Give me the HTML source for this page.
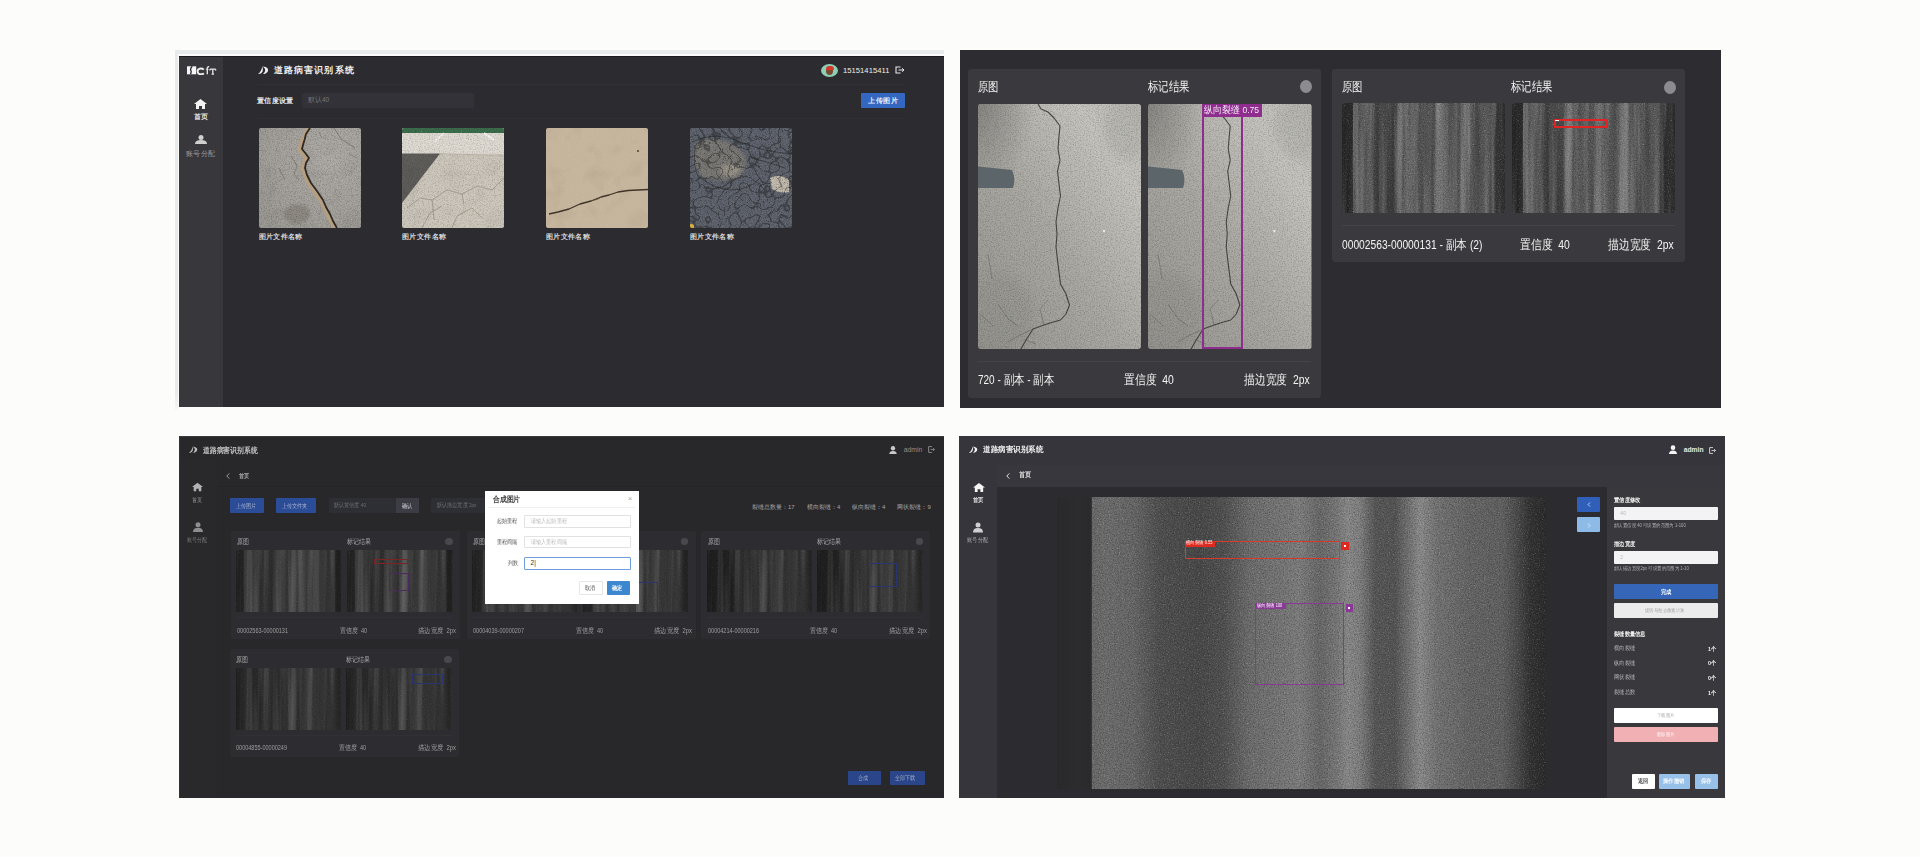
<!DOCTYPE html>
<html><head><meta charset="utf-8">
<style>
*{margin:0;padding:0;box-sizing:border-box}
html,body{width:1920px;height:857px;overflow:hidden;background:#fcfcfa;font-family:"Liberation Sans",sans-serif;position:relative}
.a{position:absolute}
.t{position:absolute;white-space:nowrap;line-height:1}
</style></head><body>
<svg width="0" height="0" style="position:absolute">
<defs>
<filter id="spk" x="0" y="0" width="100%" height="100%"><feTurbulence type="fractalNoise" baseFrequency="0.8" numOctaves="2" seed="2"/><feColorMatrix type="matrix" values="0 0 0 0 0  0 0 0 0 0  0 0 0 0 0  0 0 0 -2.2 1.25"/></filter>
<filter id="spkw" x="0" y="0" width="100%" height="100%"><feTurbulence type="fractalNoise" baseFrequency="0.8" numOctaves="2" seed="7"/><feColorMatrix type="matrix" values="0 0 0 0 1  0 0 0 0 1  0 0 0 0 1  0 0 0 2.2 -1.25"/></filter>
<filter id="blot" x="0" y="0" width="100%" height="100%"><feTurbulence type="fractalNoise" baseFrequency="0.05" numOctaves="3" seed="5"/><feColorMatrix type="matrix" values="0 0 0 0 0  0 0 0 0 0  0 0 0 0 0  0 0 0 -1.2 0.6"/></filter>
<filter id="streak" x="0" y="0" width="100%" height="100%"><feTurbulence type="fractalNoise" baseFrequency="0.18 0.006" numOctaves="2" seed="11"/><feColorMatrix type="matrix" values="0 0 0 0 1  0 0 0 0 1  0 0 0 0 1  0 0 0 -3 1.6"/></filter>
<filter id="streakd" x="0" y="0" width="100%" height="100%"><feTurbulence type="fractalNoise" baseFrequency="0.18 0.006" numOctaves="2" seed="4"/><feColorMatrix type="matrix" values="0 0 0 0 0  0 0 0 0 0  0 0 0 0 0  0 0 0 -3 1.6"/></filter>
<filter id="veins" x="0" y="0" width="100%" height="100%" color-interpolation-filters="sRGB"><feTurbulence type="turbulence" baseFrequency="0.1" numOctaves="1" seed="9"/><feColorMatrix type="matrix" values="0 0 0 0 0.1  0 0 0 0 0.1  0 0 0 0 0.1  -14 0 0 0 1.25"/></filter>
<filter id="blur1" x="-30%" y="-30%" width="160%" height="160%"><feGaussianBlur stdDeviation="0.6"/></filter>
<filter id="blur2" x="-30%" y="-30%" width="160%" height="160%"><feGaussianBlur stdDeviation="1.5"/></filter>
<filter id="blur4" x="-50%" y="-50%" width="200%" height="200%"><feGaussianBlur stdDeviation="4"/></filter>
</defs></svg>

<!-- ============ PANEL 1 ============ -->
<div class="a" style="left:175px;top:50px;width:769px;height:4px;background:#e9eaec"></div>
<div class="a" style="left:175px;top:50px;width:3px;height:360px;background:linear-gradient(180deg,#e9eaec 95%,#f6f6f6)"></div>
<div class="a" style="left:178px;top:54px;width:766px;height:2px;background:#fbfbfb"></div>
<div class="a" id="p1" style="left:179px;top:56px;width:765px;height:351px;background:#2c2b2f;overflow:hidden">
  <div class="a" style="left:0;top:0;width:765px;height:1px;background:#1c1b1f"></div>
  <div class="a" style="left:0;top:1px;width:44px;height:350px;background:#38373c"></div>
  <!-- logo -->
  <svg class="a" style="left:7.5px;top:9.6px" width="30" height="9" viewBox="0 0 30 9">
    <path d="M0 0.3 L9.2 0.3 L9.2 8.3 L0 8.3 Z" fill="#f6f6f6"/>
    <path d="M5.2 0.3 Q3.2 2.5 3.7 4.2 Q4.8 5.2 3.5 8.3" stroke="#2f2e33" stroke-width="1.4" fill="none"/>
    <path d="M16.8 3.6 Q15.5 2.4 13.6 2.5 Q10.6 2.8 10.6 5.5 Q10.8 8.3 13.8 8.3 Q15.6 8.3 16.8 7.2" stroke="#ececec" stroke-width="1.9" fill="none"/>
    <path d="M20.3 8.3 L20.3 2 Q20.6 0.6 22.2 0.5" stroke="#e2e0e0" stroke-width="1.4" fill="none"/>
    <path d="M18.8 3.3 L21.6 3.3" stroke="#e2e0e0" stroke-width="0.9"/>
    <path d="M23 3.2 L28.6 3.2 M25.8 3.2 L25.8 8.3 M24.6 8.2 L27 8.2 M23 3 L23 4.4 M28.6 3 L28.6 4.4" stroke="#e8e6e6" stroke-width="1.3" fill="none"/>
  </svg>
  <!-- sidebar icons -->
  <svg class="a" style="left:15px;top:43px" width="13" height="10" viewBox="0 0 13 10"><path d="M6.5 0 L13 5 L11 5 L11 10 L8 10 L8 7 L5 7 L5 10 L2 10 L2 5 L0 5 Z" fill="#f2f2f2"/></svg>
  <div class="t" style="left:15px;top:57px;font-size:7px;color:#e6e6e6;font-weight:bold">首页</div>
  <svg class="a" style="left:16px;top:79px" width="12" height="9" viewBox="0 0 12 9"><circle cx="6" cy="2.5" r="2.5" fill="#cfcfcf"/><path d="M0 9 Q0 5 6 5 Q12 5 12 9 Z" fill="#cfcfcf"/></svg>
  <div class="t" style="left:7px;top:94px;font-size:7px;color:#9a9a9e;letter-spacing:0.4px">账号分配</div>
  <!-- title -->
  <svg class="a" style="left:78.7px;top:9.7px" width="11" height="9" viewBox="0 0 11 9"><path d="M0 8 C3.8 8.3 6 5 4.3 0.4 C3.6 4 2.2 6.3 0 8 Z M5 8.1 C8.6 8.2 11.2 4.8 9.6 2.4 C8.8 1.1 6.6 0.3 4.3 0.4 C6.9 1.6 8.9 4 5 8.1 Z" fill="#f0f0f0"/></svg>
  <div class="t" style="left:95px;top:10px;font-size:9px;font-weight:bold;color:#f0f0f0;letter-spacing:1.1px">道路病害识别系统</div>
  <div class="a" style="left:78px;top:28px;width:648px;height:1px;background:#313035"></div>
  <!-- user -->
  <div class="a" style="left:642px;top:7.5px;width:17px;height:13px;border-radius:50%;background:#8ccfb4;overflow:hidden">
    <div class="a" style="left:5px;top:3px;width:7px;height:8px;border-radius:50%;background:#7a4a30"></div>
    <div class="a" style="left:4.5px;top:2px;width:8px;height:4px;border-radius:4px 4px 1px 1px;background:#d8362a"></div>
  </div>
  <div class="t" style="left:664px;top:10.6px;font-size:7.6px;color:#eeeeee;letter-spacing:0.05px">15151415411</div>
  <svg class="a" style="left:716px;top:10px" width="10" height="8" viewBox="0 0 10 8"><path d="M5.5 1 L1 1 L1 7 L5.5 7" stroke="#e8e8e8" stroke-width="1.1" fill="none"/><path d="M3.5 4 L9 4 M7 2.3 L9 4 L7 5.7" stroke="#e8e8e8" stroke-width="1" fill="none"/></svg>
  <!-- setting row -->
  <div class="t" style="left:78px;top:40.5px;font-size:7px;font-weight:bold;color:#e8e8e8;letter-spacing:0.3px">置信度设置</div>
  <div class="a" style="left:123px;top:36.5px;width:172px;height:15px;background:#333238;border-radius:2px"></div>
  <div class="t" style="left:129px;top:41px;font-size:6.5px;color:#77767c">默认40</div>
  <div class="a" style="left:682px;top:37px;width:44px;height:14.5px;background:#3468c0;border-radius:1px"></div>
  <div class="t" style="left:689px;top:41px;font-size:7px;color:#e8eefa;font-weight:bold;letter-spacing:0.5px">上传图片</div>
  <div class="a" style="left:78px;top:61.5px;width:648px;height:1px;background:#302f34"></div>
  <!-- images -->
  <div class="a" style="left:79.5px;top:72px;width:102px;height:100px;border-radius:2px;overflow:hidden"><svg width="102" height="100" viewBox="0 0 102 100">
<defs><radialGradient id="i1g" cx="0.7" cy="0.3" r="0.9"><stop offset="0" stop-color="#aeaba6"/><stop offset="1" stop-color="#9d9a95"/></radialGradient></defs>
<rect width="102" height="100" fill="url(#i1g)"/>
<rect width="102" height="100" filter="url(#blot)" opacity="0.12"/>
<ellipse cx="38" cy="86" rx="13" ry="10" fill="#6f6a62" opacity="0.4" filter="url(#blur2)"/>
<rect width="102" height="100" filter="url(#spk)" opacity="0.22"/>
<rect width="102" height="100" filter="url(#spkw)" opacity="0.2"/>
<path d="M49 0 L43 12 L40 21 L47 30 L43 40 L49 55 L61 72 L68 86 L75 100" stroke="#b59f80" stroke-width="3.4" fill="none" stroke-linejoin="round" filter="url(#blur1)"/>
<path d="M51 0 L47 6 L45.5 12 L44 17 L43 21 L47 26 L50 30 L47 35 L46 40 L48 47 L52 55 L58 63 L64 72 L67 79 L71 86 L74 93 L78 100" stroke="#2f2923" stroke-width="1.8" fill="none" stroke-linejoin="round"/>
<path d="M75 0 L82 11 L96 20 M60 4 L63 10 M32 28 L38 38 L35 46 L40 52 M20 40 L26 52 M90 26 L98 30" stroke="#5e574e" stroke-width="0.8" fill="none" opacity="0.6"/>
</svg></div>
  <div class="a" style="left:223px;top:72px;width:102px;height:100px;border-radius:2px;overflow:hidden"><svg width="102" height="100" viewBox="0 0 102 100">
<rect width="102" height="100" fill="#cdc7bc"/>
<rect width="102" height="26" fill="#dedad2"/>
<rect width="102" height="5" fill="#3b6d4c"/>
<rect x="19" y="2" width="1" height="3" fill="#c0503a"/><rect x="59" y="2" width="1" height="3" fill="#c0503a"/>
<path d="M42 5 L32 14 M82 5 L92 12" stroke="#f6f6f6" stroke-width="1.6"/>
<path d="M0 25.5 L38 25.5 L0 75 Z" fill="#5f5e5b"/>
<rect y="26" width="102" height="74" filter="url(#blot)" opacity="0.1"/>
<rect width="102" height="100" filter="url(#spk)" opacity="0.18"/>
<path d="M5 80 L18 70 L30 72 L45 62 L60 66 L75 58 L90 62 L102 50 M20 100 L28 85 L40 78 M50 100 L55 88 L70 80 L80 90 M60 66 L62 76 M30 72 L32 92" stroke="#6f695f" stroke-width="0.6" fill="none" opacity="0.7"/>
<path d="M38 25.5 L102 28" stroke="#b8b0a3" stroke-width="0.8"/>
</svg></div>
  <div class="a" style="left:366.8px;top:72px;width:102px;height:100px;border-radius:2px;overflow:hidden"><svg width="102" height="100" viewBox="0 0 102 100">
<rect width="102" height="100" fill="#c5b59c"/>
<rect width="102" height="100" filter="url(#blot)" opacity="0.1"/>
<rect width="102" height="100" filter="url(#spkw)" opacity="0.15"/>
<path d="M3 86 L12 84 L23 81 L34 76 L45 73 L55 69 L63 67 L72 64 L82 62.5 L92 62 L102 61.5" stroke="#3e3428" stroke-width="1.3" fill="none" stroke-linejoin="round"/>
<path d="M45 73 L52 71 L57 68" stroke="#5a4c3a" stroke-width="0.8" fill="none"/>
<circle cx="92" cy="23" r="0.9" fill="#3e3428"/>
</svg></div>
  <div class="a" style="left:510.8px;top:72px;width:102px;height:100px;border-radius:2px;overflow:hidden"><svg width="102" height="100" viewBox="0 0 102 100">
<rect width="102" height="100" fill="#5e636d"/>
<path d="M4 18 Q10 10 30 12 Q45 14 55 28 Q58 40 50 48 Q35 56 15 50 Q4 44 4 30 Z" fill="#858179" filter="url(#blur2)" opacity="0.75"/>
<ellipse cx="40" cy="42" rx="10" ry="6" fill="#a49e92" filter="url(#blur2)" opacity="0.7"/>
<path d="M80 50 Q90 45 99 52 L99 64 Q90 66 82 61 Z" fill="#c3bcae" filter="url(#blur1)"/>
<rect width="102" height="100" filter="url(#spk)" opacity="0.3"/>
<rect width="102" height="100" filter="url(#spkw)" opacity="0.15"/>
<rect width="102" height="100" filter="url(#veins)" opacity="0.42"/>
<path d="M2 14 Q20 5 40 10 Q60 18 75 22 Q90 25 102 26 M5 20 Q3 40 8 48 Q22 60 40 62 Q60 62 70 50 M55 15 L62 30 L80 35 L95 40" stroke="#23231f" stroke-width="0.9" fill="none" opacity="0.6"/>
<circle cx="1.5" cy="98.5" r="2.5" fill="#d8b040"/>
</svg></div>
  <div class="t" style="left:79.5px;top:176.5px;font-size:7px;font-weight:bold;color:#d8d8d8;letter-spacing:0.4px">图片文件名称</div>
  <div class="t" style="left:223px;top:176.5px;font-size:7px;font-weight:bold;color:#d8d8d8;letter-spacing:0.4px">图片文件名称</div>
  <div class="t" style="left:366.8px;top:176.5px;font-size:7px;font-weight:bold;color:#d8d8d8;letter-spacing:0.4px">图片文件名称</div>
  <div class="t" style="left:510.8px;top:176.5px;font-size:7px;font-weight:bold;color:#d8d8d8;letter-spacing:0.4px">图片文件名称</div>
</div>

<!-- ============ PANEL 2 ============ -->
<div class="a" id="p2" style="left:960px;top:50px;width:761px;height:358px;background:#2d2c31;overflow:hidden">
  <!-- card 1 -->
  <div class="a" style="left:8px;top:19px;width:353px;height:329px;background:#3a393e;border-radius:3px"></div>
  <div class="t" style="left:18px;top:30.5px;font-size:12.5px;color:#f2f2f2;transform:scaleX(0.8);transform-origin:left">原图</div>
  <div class="t" style="left:187.5px;top:30.5px;font-size:12.5px;color:#f2f2f2;transform:scaleX(0.8);transform-origin:left">标记结果</div>
  <div class="a" style="left:340px;top:30px;width:12px;height:13px;border-radius:50%;background:#8c8b90"></div>
  <div class="a" style="left:18px;top:53.5px;width:163px;height:245px;border-radius:3px;overflow:hidden"><svg width="163" height="245" viewBox="0 0 163 245" preserveAspectRatio="none" style="display:block"><defs><linearGradient id="cl1" x1="0" y1="1" x2="1" y2="0"><stop offset="0" stop-color="#95948e"/><stop offset="0.45" stop-color="#a9a8a2"/><stop offset="0.8" stop-color="#c4c3bd"/><stop offset="1" stop-color="#bdbcb6"/></linearGradient><radialGradient id="cr1" cx="0" cy="0" r="0.35"><stop offset="0" stop-color="#7c7b77" stop-opacity="0.8"/><stop offset="1" stop-color="#7c7b77" stop-opacity="0"/></radialGradient></defs><rect width="163" height="245" fill="url(#cl1)"/><rect width="163" height="245" fill="url(#cr1)"/><ellipse cx="150" cy="25" rx="25" ry="30" fill="#a3a29d" opacity="0.3" filter="url(#blur4)"/><ellipse cx="20" cy="210" rx="35" ry="40" fill="#8f8e89" opacity="0.4" filter="url(#blur4)"/><rect width="163" height="245" filter="url(#spk)" opacity="0.2"/><rect width="163" height="245" filter="url(#spkw)" opacity="0.16"/><path d="M-5 62 L34 66 Q38 74 35 84 L-5 84 Z" fill="#5b656a" filter="url(#blur1)"/><path d="M60 0 L63 5 L70 8 L76 14 L82 22 L81 32 L80 45 L82 56 L79.5 67 L81 80 L82.5 92 L80 104 L78 118 L79 130 L78 143 L80 160 L82.5 180 L88 190 L91.5 201 L88 210 L82.5 216 L72 219 L66 221 L55 225 L48 236 L43 245" stroke="#3a3936" stroke-width="1.1" fill="none" stroke-linejoin="round" opacity="0.9"/><path d="M55 225 L40 232 L30 238 M20 200 L30 215 L40 222 M10 150 L14 175 M2 210 L15 222 M66 221 L62 205 L70 196 M48 236 L58 240" stroke="#55534e" stroke-width="0.7" fill="none" opacity="0.6"/><circle cx="126" cy="127" r="1.2" fill="#e8e8e4"/></svg></div>
  <div class="a" style="left:188px;top:53.5px;width:163.5px;height:245px;border-radius:3px;overflow:hidden"><svg width="163.5" height="245" viewBox="0 0 163 245" preserveAspectRatio="none" style="display:block"><defs><linearGradient id="cl2" x1="0" y1="1" x2="1" y2="0"><stop offset="0" stop-color="#95948e"/><stop offset="0.45" stop-color="#a9a8a2"/><stop offset="0.8" stop-color="#c4c3bd"/><stop offset="1" stop-color="#bdbcb6"/></linearGradient><radialGradient id="cr2" cx="0" cy="0" r="0.35"><stop offset="0" stop-color="#7c7b77" stop-opacity="0.8"/><stop offset="1" stop-color="#7c7b77" stop-opacity="0"/></radialGradient></defs><rect width="163" height="245" fill="url(#cl2)"/><rect width="163" height="245" fill="url(#cr2)"/><ellipse cx="150" cy="25" rx="25" ry="30" fill="#a3a29d" opacity="0.3" filter="url(#blur4)"/><ellipse cx="20" cy="210" rx="35" ry="40" fill="#8f8e89" opacity="0.4" filter="url(#blur4)"/><rect width="163" height="245" filter="url(#spk)" opacity="0.2"/><rect width="163" height="245" filter="url(#spkw)" opacity="0.16"/><path d="M-5 62 L34 66 Q38 74 35 84 L-5 84 Z" fill="#5b656a" filter="url(#blur1)"/><path d="M60 0 L63 5 L70 8 L76 14 L82 22 L81 32 L80 45 L82 56 L79.5 67 L81 80 L82.5 92 L80 104 L78 118 L79 130 L78 143 L80 160 L82.5 180 L88 190 L91.5 201 L88 210 L82.5 216 L72 219 L66 221 L55 225 L48 236 L43 245" stroke="#3a3936" stroke-width="1.1" fill="none" stroke-linejoin="round" opacity="0.9"/><path d="M55 225 L40 232 L30 238 M20 200 L30 215 L40 222 M10 150 L14 175 M2 210 L15 222 M66 221 L62 205 L70 196 M48 236 L58 240" stroke="#55534e" stroke-width="0.7" fill="none" opacity="0.6"/><circle cx="126" cy="127" r="1.2" fill="#e8e8e4"/></svg>
    <div class="a" style="left:53.5px;top:0;width:41px;height:245px;border:2px solid #8e2d8e"></div>
    <div class="a" style="left:53.5px;top:0;width:60.5px;height:13.5px;background:#8e2d8e"></div>
    <div class="t" style="left:56px;top:1.5px;font-size:9.5px;color:#f4e8f4;transform:scaleX(0.9);transform-origin:left">纵向裂缝 0.75</div>
  </div>
  <div class="a" style="left:18px;top:311px;width:333px;height:1px;background:#444349"></div>
  <div class="t" style="left:18px;top:324px;font-size:12.5px;color:#f4f4f4;transform:scaleX(0.8);transform-origin:left">720 - 副本 - 副本</div>
  <div class="t" style="left:164px;top:324px;font-size:12.5px;color:#f4f4f4;font-weight:500;transform:scaleX(0.83);transform-origin:left">置信度 &nbsp;40</div>
  <div class="t" style="left:283.5px;top:324px;font-size:12.5px;color:#f4f4f4;transform:scaleX(0.83);transform-origin:left">描边宽度 &nbsp;2px</div>

  <!-- card 2 -->
  <div class="a" style="left:372px;top:19px;width:353px;height:193px;background:#3a393e;border-radius:3px"></div>
  <div class="t" style="left:381.5px;top:31px;font-size:12.5px;color:#f2f2f2;transform:scaleX(0.8);transform-origin:left">原图</div>
  <div class="t" style="left:551px;top:31px;font-size:12.5px;color:#f2f2f2;transform:scaleX(0.8);transform-origin:left">标记结果</div>
  <div class="a" style="left:704px;top:30.5px;width:12px;height:13px;border-radius:50%;background:#8c8b90"></div>
  <div class="a" style="left:381.5px;top:53.3px;width:163px;height:110px;border-radius:3px;overflow:hidden"><svg width="163" height="110" viewBox="0 0 163 110" preserveAspectRatio="none" style="display:block"><defs><linearGradient id="g3" x1="0" x2="1" y1="0" y2="0"><stop offset="0.000" stop-color="rgb(44,44,44)"/><stop offset="0.067" stop-color="rgb(44,44,44)"/><stop offset="0.068" stop-color="rgb(91,91,91)"/><stop offset="0.160" stop-color="rgb(100,100,100)"/><stop offset="0.200" stop-color="rgb(76,76,76)"/><stop offset="0.330" stop-color="rgb(72,72,72)"/><stop offset="0.360" stop-color="rgb(105,105,105)"/><stop offset="0.430" stop-color="rgb(107,107,107)"/><stop offset="0.460" stop-color="rgb(86,86,86)"/><stop offset="0.560" stop-color="rgb(88,88,88)"/><stop offset="0.580" stop-color="rgb(120,120,120)"/><stop offset="0.630" stop-color="rgb(120,120,120)"/><stop offset="0.660" stop-color="rgb(81,81,81)"/><stop offset="0.710" stop-color="rgb(78,78,78)"/><stop offset="0.730" stop-color="rgb(110,110,110)"/><stop offset="0.780" stop-color="rgb(113,113,113)"/><stop offset="0.800" stop-color="rgb(88,88,88)"/><stop offset="0.930" stop-color="rgb(88,88,88)"/><stop offset="0.950" stop-color="rgb(55,55,55)"/><stop offset="1.000" stop-color="rgb(48,48,48)"/></linearGradient></defs><rect width="163" height="110" fill="url(#g3)"/><rect width="163" height="110" filter="url(#spkw)" opacity="0.30"/><rect width="163" height="110" filter="url(#spk)" opacity="0.30"/><rect width="163" height="110" filter="url(#streak)" opacity="0.18"/><rect width="163" height="110" filter="url(#streakd)" opacity="0.18"/></svg></div>
  <div class="a" style="left:552px;top:53.3px;width:163px;height:110px;border-radius:3px;overflow:hidden"><svg width="163" height="110" viewBox="0 0 163 110" preserveAspectRatio="none" style="display:block"><defs><linearGradient id="g4" x1="0" x2="1" y1="0" y2="0"><stop offset="0.000" stop-color="rgb(44,44,44)"/><stop offset="0.065" stop-color="rgb(44,44,44)"/><stop offset="0.067" stop-color="rgb(96,96,96)"/><stop offset="0.150" stop-color="rgb(100,100,100)"/><stop offset="0.190" stop-color="rgb(74,74,74)"/><stop offset="0.300" stop-color="rgb(76,76,76)"/><stop offset="0.330" stop-color="rgb(107,107,107)"/><stop offset="0.360" stop-color="rgb(105,105,105)"/><stop offset="0.420" stop-color="rgb(91,91,91)"/><stop offset="0.500" stop-color="rgb(88,88,88)"/><stop offset="0.520" stop-color="rgb(115,115,115)"/><stop offset="0.560" stop-color="rgb(115,115,115)"/><stop offset="0.600" stop-color="rgb(86,86,86)"/><stop offset="0.650" stop-color="rgb(91,91,91)"/><stop offset="0.670" stop-color="rgb(115,115,115)"/><stop offset="0.710" stop-color="rgb(115,115,115)"/><stop offset="0.740" stop-color="rgb(91,91,91)"/><stop offset="0.900" stop-color="rgb(88,88,88)"/><stop offset="0.930" stop-color="rgb(52,52,52)"/><stop offset="1.000" stop-color="rgb(46,46,46)"/></linearGradient></defs><rect width="163" height="110" fill="url(#g4)"/><rect width="163" height="110" filter="url(#spkw)" opacity="0.30"/><rect width="163" height="110" filter="url(#spk)" opacity="0.30"/><rect width="163" height="110" filter="url(#streak)" opacity="0.18"/><rect width="163" height="110" filter="url(#streakd)" opacity="0.18"/></svg>
    <div class="a" style="left:41.5px;top:15.5px;width:54px;height:9px;border:2px solid #e02424"></div>
    <div class="a" style="left:43px;top:17px;width:4px;height:1px;background:#ffffff"></div>
  </div>
  <div class="a" style="left:381.5px;top:174.5px;width:333px;height:1px;background:#444349"></div>
  <div class="t" style="left:381.5px;top:189px;font-size:12.5px;color:#f4f4f4;transform:scaleX(0.82);transform-origin:left">00002563-00000131 - 副本 (2)</div>
  <div class="t" style="left:559.5px;top:189px;font-size:12.5px;color:#f4f4f4;transform:scaleX(0.83);transform-origin:left">置信度 &nbsp;40</div>
  <div class="t" style="left:648px;top:189px;font-size:12.5px;color:#f4f4f4;transform:scaleX(0.83);transform-origin:left">描边宽度 &nbsp;2px</div>
</div>

<!-- ============ PANEL 3 ============ -->
<div class="a" id="p3" style="left:179px;top:436px;width:765px;height:362px;background:#28282b;overflow:hidden">
  <div class="a" style="left:0;top:0;width:765px;height:1px;background:#3a3a3d"></div>
  <div class="a" style="left:0;top:23px;width:38px;height:339px;background:#29292c"></div>
  <div class="a" style="left:0;top:0;width:1px;height:362px;background:#333336"></div>
  <svg class="a" style="left:10.4px;top:10.4px" width="9" height="8" viewBox="0 0 11 9"><path d="M0 8 C3.8 8.3 6 5 4.3 0.4 C3.6 4 2.2 6.3 0 8 Z M5 8.1 C8.6 8.2 11.2 4.8 9.6 2.4 C8.8 1.1 6.6 0.3 4.3 0.4 C6.9 1.6 8.9 4 5 8.1 Z" fill="#bdbdbd"/></svg>
  <div class="t" style="left:23.8px;top:10.5px;font-size:7.6px;color:#c4c4c4;font-weight:bold;transform:scaleX(0.85);transform-origin:left">道路病害识别系统</div>
  <svg class="a" style="left:709.7px;top:9.8px" width="8" height="8.5" viewBox="0 0 8 9"><circle cx="4" cy="2.4" r="2.3" fill="#c9c9c9"/><path d="M0 9 Q0 5.2 4 5.2 Q8 5.2 8 9 Z" fill="#c9c9c9"/></svg>
  <div class="t" style="left:724.7px;top:11px;font-size:6.8px;color:#8f8f92">admin</div>
  <svg class="a" style="left:749.4px;top:10.2px" width="7" height="7" viewBox="0 0 7 7"><path d="M4 0.6 L0.6 0.6 L0.6 6.4 L4 6.4" stroke="#8f8f92" stroke-width="0.9" fill="none"/><path d="M2.5 3.5 L6.5 3.5 M5 2 L6.5 3.5 L5 5" stroke="#8f8f92" stroke-width="0.8" fill="none"/></svg>
  <div class="a" style="left:38px;top:50px;width:727px;height:1px;background:#252528"></div>
  <svg class="a" style="left:47px;top:36.5px" width="4" height="6" viewBox="0 0 4 6"><path d="M3.3 0.4 L0.8 3 L3.3 5.6" stroke="#a8a8aa" stroke-width="0.9" fill="none"/></svg>
  <div class="t" style="left:59.6px;top:36.5px;font-size:6px;color:#a8a8aa;font-weight:bold;transform:scaleX(0.85);transform-origin:left">首页</div>
  <svg class="a" style="left:13px;top:45.8px" width="11" height="10" viewBox="0 0 13 10"><path d="M6.5 0 L13 5 L11 5 L11 10 L8 10 L8 7 L5 7 L5 10 L2 10 L2 5 L0 5 Z" fill="#b3b3b5"/></svg>
  <div class="t" style="left:13px;top:61px;font-size:6px;color:#9e9ea0;transform:scaleX(0.85);transform-origin:left">首页</div>
  <svg class="a" style="left:13.5px;top:85.7px" width="10" height="10.5" viewBox="0 0 10 10"><circle cx="5" cy="2.6" r="2.5" fill="#8d8d90"/><path d="M0 10 Q0 5.6 5 5.6 Q10 5.6 10 10 Z" fill="#8d8d90"/></svg>
  <div class="t" style="left:7.5px;top:101px;font-size:6px;color:#77777a;transform:scaleX(0.85);transform-origin:left">账号分配</div>

  <div class="a" style="left:50.8px;top:62.2px;width:34.5px;height:15.3px;background:#2b4c97;border-radius:1px"></div>
  <div class="t" style="left:57px;top:67px;font-size:6px;color:#a9b4cc;transform:scaleX(0.85);transform-origin:left">上传图片</div>
  <div class="a" style="left:97.4px;top:62.2px;width:40px;height:15.3px;background:#2b4c97;border-radius:1px"></div>
  <div class="t" style="left:103px;top:67px;font-size:6px;color:#a9b4cc;transform:scaleX(0.85);transform-origin:left">上传文件夹</div>
  <div class="a" style="left:149.5px;top:62.2px;width:90px;height:15.3px;background:#2e2f35;border-radius:1px"></div>
  <div class="a" style="left:216.8px;top:62.2px;width:22.8px;height:15.3px;background:#3c3d44"></div>
  <div class="t" style="left:155px;top:67px;font-size:5.5px;color:#6e6e74;transform:scaleX(0.85);transform-origin:left">默认置信度 40</div>
  <div class="t" style="left:223px;top:67px;font-size:6px;color:#a9a9ae;font-weight:bold;transform:scaleX(0.85);transform-origin:left">确认</div>
  <div class="a" style="left:252px;top:62.2px;width:60px;height:15.3px;background:#2e2f35;border-radius:1px"></div>
  <div class="t" style="left:258px;top:67px;font-size:5.5px;color:#6e6e74;transform:scaleX(0.85);transform-origin:left">默认描边宽度 2px</div>
  <div class="t" style="left:573px;top:67.5px;font-size:6px;color:#a6a6a8">裂缝总数量：17</div><div class="t" style="left:627.9px;top:67.5px;font-size:6px;color:#a6a6a8">横向裂缝：4</div><div class="t" style="left:673px;top:67.5px;font-size:6px;color:#a6a6a8">纵向裂缝：4</div><div class="t" style="left:718.4px;top:67.5px;font-size:6px;color:#a6a6a8">网状裂缝：9</div>

  <div class="a" style="left:51.6px;top:95.3px;width:229px;height:108px;background:#2d2d31;border-radius:2px">
    <div class="t" style="left:6.3px;top:8px;font-size:6.5px;color:#a9a9ab;transform:scaleX(0.85);transform-origin:left">原图</div>
    <div class="t" style="left:116.2px;top:8px;font-size:6.5px;color:#a9a9ab;transform:scaleX(0.85);transform-origin:left">标记结果</div>
    <div class="a" style="left:214.3px;top:7px;width:7.7px;height:7px;border-radius:50%;background:#49494d"></div>
    <div class="a" style="left:5.6px;top:18.9px;width:105px;height:62.3px;overflow:hidden"><svg width="105" height="62.3" viewBox="0 0 105 62.3" preserveAspectRatio="none" style="display:block"><defs><linearGradient id="g5" x1="0" x2="1" y1="0" y2="0"><stop offset="0.000" stop-color="rgb(36,36,36)"/><stop offset="0.070" stop-color="rgb(36,36,36)"/><stop offset="0.075" stop-color="rgb(58,58,58)"/><stop offset="0.200" stop-color="rgb(62,62,62)"/><stop offset="0.240" stop-color="rgb(48,48,48)"/><stop offset="0.360" stop-color="rgb(50,50,50)"/><stop offset="0.400" stop-color="rgb(68,68,68)"/><stop offset="0.450" stop-color="rgb(66,66,66)"/><stop offset="0.480" stop-color="rgb(58,58,58)"/><stop offset="0.580" stop-color="rgb(60,60,60)"/><stop offset="0.600" stop-color="rgb(78,78,78)"/><stop offset="0.640" stop-color="rgb(76,76,76)"/><stop offset="0.670" stop-color="rgb(56,56,56)"/><stop offset="0.720" stop-color="rgb(60,60,60)"/><stop offset="0.740" stop-color="rgb(74,74,74)"/><stop offset="0.780" stop-color="rgb(72,72,72)"/><stop offset="0.800" stop-color="rgb(56,56,56)"/><stop offset="0.940" stop-color="rgb(54,54,54)"/><stop offset="0.950" stop-color="rgb(34,34,34)"/><stop offset="1.000" stop-color="rgb(34,34,34)"/></linearGradient></defs><rect width="105" height="62.3" fill="url(#g5)"/><rect width="105" height="62.3" filter="url(#spkw)" opacity="0.10"/><rect width="105" height="62.3" filter="url(#spk)" opacity="0.10"/><rect width="105" height="62.3" filter="url(#streak)" opacity="0.14"/><rect width="105" height="62.3" filter="url(#streakd)" opacity="0.14"/></svg></div>
    <div class="a" style="left:116.2px;top:18.9px;width:105.8px;height:62.3px;overflow:hidden"><svg width="105.8" height="62.3" viewBox="0 0 105.8 62.3" preserveAspectRatio="none" style="display:block"><defs><linearGradient id="g6" x1="0" x2="1" y1="0" y2="0"><stop offset="0.000" stop-color="rgb(36,36,36)"/><stop offset="0.070" stop-color="rgb(36,36,36)"/><stop offset="0.075" stop-color="rgb(60,60,60)"/><stop offset="0.180" stop-color="rgb(58,58,58)"/><stop offset="0.220" stop-color="rgb(46,46,46)"/><stop offset="0.340" stop-color="rgb(50,50,50)"/><stop offset="0.380" stop-color="rgb(66,66,66)"/><stop offset="0.420" stop-color="rgb(64,64,64)"/><stop offset="0.460" stop-color="rgb(56,56,56)"/><stop offset="0.500" stop-color="rgb(56,56,56)"/><stop offset="0.530" stop-color="rgb(70,70,70)"/><stop offset="0.570" stop-color="rgb(70,70,70)"/><stop offset="0.600" stop-color="rgb(56,56,56)"/><stop offset="0.680" stop-color="rgb(56,56,56)"/><stop offset="0.700" stop-color="rgb(74,74,74)"/><stop offset="0.740" stop-color="rgb(72,72,72)"/><stop offset="0.770" stop-color="rgb(56,56,56)"/><stop offset="0.930" stop-color="rgb(54,54,54)"/><stop offset="0.950" stop-color="rgb(34,34,34)"/><stop offset="1.000" stop-color="rgb(34,34,34)"/></linearGradient></defs><rect width="105.8" height="62.3" fill="url(#g6)"/><rect width="105.8" height="62.3" filter="url(#spkw)" opacity="0.10"/><rect width="105.8" height="62.3" filter="url(#spk)" opacity="0.10"/><rect width="105.8" height="62.3" filter="url(#streak)" opacity="0.14"/><rect width="105.8" height="62.3" filter="url(#streakd)" opacity="0.14"/></svg><div class="a" style="left:27.3px;top:8.4px;width:34px;height:5px;border:1px solid #7a2424"></div><div class="a" style="left:42.7px;top:22.4px;width:19.6px;height:18px;border:1px solid #4a2b5a"></div></div>
    <div class="a" style="left:5.6px;top:86px;width:216px;height:1px;background:#313135"></div>
    <div class="t" style="left:6.3px;top:96.3px;font-size:6.5px;color:#9d9d9f;transform:scaleX(0.85);transform-origin:left">00002563-00000131</div>
    <div class="t" style="left:109px;top:96.3px;font-size:6.5px;color:#9d9d9f;transform:scaleX(0.85);transform-origin:left">置信度 &nbsp;40</div>
    <div class="t" style="left:187.7px;top:96.3px;font-size:6.5px;color:#9d9d9f;transform:scaleX(0.9);transform-origin:left">描边宽度 &nbsp;2px</div>
  </div>
  <div class="a" style="left:287.5px;top:95.3px;width:229px;height:108px;background:#2d2d31;border-radius:2px">
    <div class="t" style="left:6.3px;top:8px;font-size:6.5px;color:#a9a9ab;transform:scaleX(0.85);transform-origin:left">原图</div>
    <div class="t" style="left:116.2px;top:8px;font-size:6.5px;color:#a9a9ab;transform:scaleX(0.85);transform-origin:left">标记结果</div>
    <div class="a" style="left:214.3px;top:7px;width:7.7px;height:7px;border-radius:50%;background:#49494d"></div>
    <div class="a" style="left:5.6px;top:18.9px;width:105px;height:62.3px;overflow:hidden"><svg width="105" height="62.3" viewBox="0 0 105 62.3" preserveAspectRatio="none" style="display:block"><defs><linearGradient id="g7" x1="0" x2="1" y1="0" y2="0"><stop offset="0.000" stop-color="rgb(34,34,34)"/><stop offset="0.100" stop-color="rgb(40,40,40)"/><stop offset="0.150" stop-color="rgb(58,58,58)"/><stop offset="0.250" stop-color="rgb(52,52,52)"/><stop offset="0.300" stop-color="rgb(62,62,62)"/><stop offset="0.400" stop-color="rgb(50,50,50)"/><stop offset="0.500" stop-color="rgb(66,66,66)"/><stop offset="0.550" stop-color="rgb(54,54,54)"/><stop offset="0.650" stop-color="rgb(60,60,60)"/><stop offset="0.750" stop-color="rgb(52,52,52)"/><stop offset="0.850" stop-color="rgb(58,58,58)"/><stop offset="0.940" stop-color="rgb(50,50,50)"/><stop offset="1.000" stop-color="rgb(36,36,36)"/></linearGradient></defs><rect width="105" height="62.3" fill="url(#g7)"/><rect width="105" height="62.3" filter="url(#spkw)" opacity="0.10"/><rect width="105" height="62.3" filter="url(#spk)" opacity="0.10"/><rect width="105" height="62.3" filter="url(#streak)" opacity="0.14"/><rect width="105" height="62.3" filter="url(#streakd)" opacity="0.14"/></svg></div>
    <div class="a" style="left:116.2px;top:18.9px;width:105.8px;height:62.3px;overflow:hidden"><svg width="105.8" height="62.3" viewBox="0 0 105.8 62.3" preserveAspectRatio="none" style="display:block"><defs><linearGradient id="g8" x1="0" x2="1" y1="0" y2="0"><stop offset="0.000" stop-color="rgb(34,34,34)"/><stop offset="0.080" stop-color="rgb(38,38,38)"/><stop offset="0.120" stop-color="rgb(56,56,56)"/><stop offset="0.220" stop-color="rgb(50,50,50)"/><stop offset="0.300" stop-color="rgb(64,64,64)"/><stop offset="0.380" stop-color="rgb(52,52,52)"/><stop offset="0.500" stop-color="rgb(68,68,68)"/><stop offset="0.580" stop-color="rgb(54,54,54)"/><stop offset="0.680" stop-color="rgb(62,62,62)"/><stop offset="0.780" stop-color="rgb(52,52,52)"/><stop offset="0.880" stop-color="rgb(60,60,60)"/><stop offset="0.950" stop-color="rgb(40,40,40)"/><stop offset="1.000" stop-color="rgb(34,34,34)"/></linearGradient></defs><rect width="105.8" height="62.3" fill="url(#g8)"/><rect width="105.8" height="62.3" filter="url(#spkw)" opacity="0.10"/><rect width="105.8" height="62.3" filter="url(#spk)" opacity="0.10"/><rect width="105.8" height="62.3" filter="url(#streak)" opacity="0.14"/><rect width="105.8" height="62.3" filter="url(#streakd)" opacity="0.14"/></svg><div class="a" style="left:52.8px;top:31.7px;width:22.4px;height:32px;border:1px solid #2a3470"></div></div>
    <div class="a" style="left:5.6px;top:86px;width:216px;height:1px;background:#313135"></div>
    <div class="t" style="left:6.3px;top:96.3px;font-size:6.5px;color:#9d9d9f;transform:scaleX(0.85);transform-origin:left">00004039-00000207</div>
    <div class="t" style="left:109px;top:96.3px;font-size:6.5px;color:#9d9d9f;transform:scaleX(0.85);transform-origin:left">置信度 &nbsp;40</div>
    <div class="t" style="left:187.7px;top:96.3px;font-size:6.5px;color:#9d9d9f;transform:scaleX(0.9);transform-origin:left">描边宽度 &nbsp;2px</div>
  </div>
  <div class="a" style="left:522.3px;top:95.3px;width:229px;height:108px;background:#2d2d31;border-radius:2px">
    <div class="t" style="left:6.3px;top:8px;font-size:6.5px;color:#a9a9ab;transform:scaleX(0.85);transform-origin:left">原图</div>
    <div class="t" style="left:116.2px;top:8px;font-size:6.5px;color:#a9a9ab;transform:scaleX(0.85);transform-origin:left">标记结果</div>
    <div class="a" style="left:214.3px;top:7px;width:7.7px;height:7px;border-radius:50%;background:#49494d"></div>
    <div class="a" style="left:5.6px;top:18.9px;width:105px;height:62.3px;overflow:hidden"><svg width="105" height="62.3" viewBox="0 0 105 62.3" preserveAspectRatio="none" style="display:block"><defs><linearGradient id="g9" x1="0" x2="1" y1="0" y2="0"><stop offset="0.000" stop-color="rgb(30,30,30)"/><stop offset="0.250" stop-color="rgb(34,34,34)"/><stop offset="0.300" stop-color="rgb(52,52,52)"/><stop offset="0.400" stop-color="rgb(46,46,46)"/><stop offset="0.480" stop-color="rgb(56,56,56)"/><stop offset="0.580" stop-color="rgb(48,48,48)"/><stop offset="0.660" stop-color="rgb(60,60,60)"/><stop offset="0.750" stop-color="rgb(50,50,50)"/><stop offset="0.850" stop-color="rgb(56,56,56)"/><stop offset="0.950" stop-color="rgb(46,46,46)"/><stop offset="1.000" stop-color="rgb(36,36,36)"/></linearGradient></defs><rect width="105" height="62.3" fill="url(#g9)"/><rect width="105" height="62.3" filter="url(#spkw)" opacity="0.10"/><rect width="105" height="62.3" filter="url(#spk)" opacity="0.10"/><rect width="105" height="62.3" filter="url(#streak)" opacity="0.14"/><rect width="105" height="62.3" filter="url(#streakd)" opacity="0.14"/></svg></div>
    <div class="a" style="left:116.2px;top:18.9px;width:105.8px;height:62.3px;overflow:hidden"><svg width="105.8" height="62.3" viewBox="0 0 105.8 62.3" preserveAspectRatio="none" style="display:block"><defs><linearGradient id="g10" x1="0" x2="1" y1="0" y2="0"><stop offset="0.000" stop-color="rgb(30,30,30)"/><stop offset="0.200" stop-color="rgb(34,34,34)"/><stop offset="0.280" stop-color="rgb(52,52,52)"/><stop offset="0.380" stop-color="rgb(46,46,46)"/><stop offset="0.460" stop-color="rgb(58,58,58)"/><stop offset="0.560" stop-color="rgb(48,48,48)"/><stop offset="0.640" stop-color="rgb(62,62,62)"/><stop offset="0.740" stop-color="rgb(50,50,50)"/><stop offset="0.840" stop-color="rgb(58,58,58)"/><stop offset="0.940" stop-color="rgb(48,48,48)"/><stop offset="1.000" stop-color="rgb(36,36,36)"/></linearGradient></defs><rect width="105.8" height="62.3" fill="url(#g10)"/><rect width="105.8" height="62.3" filter="url(#spkw)" opacity="0.10"/><rect width="105.8" height="62.3" filter="url(#spk)" opacity="0.10"/><rect width="105.8" height="62.3" filter="url(#streak)" opacity="0.14"/><rect width="105.8" height="62.3" filter="url(#streakd)" opacity="0.14"/></svg><div class="a" style="left:52px;top:12.6px;width:28px;height:24.2px;border:1px solid #2a3470"></div></div>
    <div class="a" style="left:5.6px;top:86px;width:216px;height:1px;background:#313135"></div>
    <div class="t" style="left:6.3px;top:96.3px;font-size:6.5px;color:#9d9d9f;transform:scaleX(0.85);transform-origin:left">00004214-00000216</div>
    <div class="t" style="left:109px;top:96.3px;font-size:6.5px;color:#9d9d9f;transform:scaleX(0.85);transform-origin:left">置信度 &nbsp;40</div>
    <div class="t" style="left:187.7px;top:96.3px;font-size:6.5px;color:#9d9d9f;transform:scaleX(0.9);transform-origin:left">描边宽度 &nbsp;2px</div>
  </div>
  <div class="a" style="left:51.1px;top:213px;width:229px;height:108px;background:#2d2d31;border-radius:2px">
    <div class="t" style="left:6.3px;top:8px;font-size:6.5px;color:#a9a9ab;transform:scaleX(0.85);transform-origin:left">原图</div>
    <div class="t" style="left:116.2px;top:8px;font-size:6.5px;color:#a9a9ab;transform:scaleX(0.85);transform-origin:left">标记结果</div>
    <div class="a" style="left:214.3px;top:7px;width:7.7px;height:7px;border-radius:50%;background:#49494d"></div>
    <div class="a" style="left:5.6px;top:18.9px;width:105px;height:62.3px;overflow:hidden"><svg width="105" height="62.3" viewBox="0 0 105 62.3" preserveAspectRatio="none" style="display:block"><defs><linearGradient id="g11" x1="0" x2="1" y1="0" y2="0"><stop offset="0.000" stop-color="rgb(32,32,32)"/><stop offset="0.100" stop-color="rgb(46,46,46)"/><stop offset="0.200" stop-color="rgb(40,40,40)"/><stop offset="0.300" stop-color="rgb(54,54,54)"/><stop offset="0.400" stop-color="rgb(44,44,44)"/><stop offset="0.500" stop-color="rgb(58,58,58)"/><stop offset="0.600" stop-color="rgb(48,48,48)"/><stop offset="0.700" stop-color="rgb(62,62,62)"/><stop offset="0.780" stop-color="rgb(50,50,50)"/><stop offset="0.880" stop-color="rgb(54,54,54)"/><stop offset="1.000" stop-color="rgb(38,38,38)"/></linearGradient></defs><rect width="105" height="62.3" fill="url(#g11)"/><rect width="105" height="62.3" filter="url(#spkw)" opacity="0.10"/><rect width="105" height="62.3" filter="url(#spk)" opacity="0.10"/><rect width="105" height="62.3" filter="url(#streak)" opacity="0.14"/><rect width="105" height="62.3" filter="url(#streakd)" opacity="0.14"/></svg></div>
    <div class="a" style="left:116.2px;top:18.9px;width:105.8px;height:62.3px;overflow:hidden"><svg width="105.8" height="62.3" viewBox="0 0 105.8 62.3" preserveAspectRatio="none" style="display:block"><defs><linearGradient id="g12" x1="0" x2="1" y1="0" y2="0"><stop offset="0.000" stop-color="rgb(32,32,32)"/><stop offset="0.100" stop-color="rgb(44,44,44)"/><stop offset="0.200" stop-color="rgb(40,40,40)"/><stop offset="0.300" stop-color="rgb(52,52,52)"/><stop offset="0.400" stop-color="rgb(44,44,44)"/><stop offset="0.520" stop-color="rgb(56,56,56)"/><stop offset="0.600" stop-color="rgb(50,50,50)"/><stop offset="0.680" stop-color="rgb(64,64,64)"/><stop offset="0.760" stop-color="rgb(50,50,50)"/><stop offset="0.880" stop-color="rgb(54,54,54)"/><stop offset="1.000" stop-color="rgb(38,38,38)"/></linearGradient></defs><rect width="105.8" height="62.3" fill="url(#g12)"/><rect width="105.8" height="62.3" filter="url(#spkw)" opacity="0.10"/><rect width="105.8" height="62.3" filter="url(#spk)" opacity="0.10"/><rect width="105.8" height="62.3" filter="url(#streak)" opacity="0.14"/><rect width="105.8" height="62.3" filter="url(#streakd)" opacity="0.14"/></svg><div class="a" style="left:65.8px;top:5.7px;width:30.5px;height:10.7px;border:1px solid #2a3470"></div></div>
    <div class="a" style="left:5.6px;top:86px;width:216px;height:1px;background:#313135"></div>
    <div class="t" style="left:6.3px;top:96.3px;font-size:6.5px;color:#9d9d9f;transform:scaleX(0.85);transform-origin:left">00004855-00000249</div>
    <div class="t" style="left:109px;top:96.3px;font-size:6.5px;color:#9d9d9f;transform:scaleX(0.85);transform-origin:left">置信度 &nbsp;40</div>
    <div class="t" style="left:187.7px;top:96.3px;font-size:6.5px;color:#9d9d9f;transform:scaleX(0.9);transform-origin:left">描边宽度 &nbsp;2px</div>
  </div>
  <div class="a" style="left:668.7px;top:334.8px;width:33.8px;height:14.7px;background:#2a4589;border-radius:1px"></div>
  <div class="t" style="left:679px;top:339px;font-size:6px;color:#9aa6c2;transform:scaleX(0.85);transform-origin:left">合成</div>
  <div class="a" style="left:711px;top:334.8px;width:34.5px;height:14.7px;background:#2a4589;border-radius:1px"></div>
  <div class="t" style="left:716px;top:339px;font-size:6px;color:#9aa6c2;transform:scaleX(0.85);transform-origin:left">全部下载</div>

  <!-- dialog -->
  <div class="a" style="left:306.2px;top:55px;width:153.5px;height:112.6px;background:#ffffff">
    <div class="t" style="left:7.5px;top:5px;font-size:8px;color:#3a3a3a;font-weight:bold;transform:scaleX(0.85);transform-origin:left">合成图片</div>
    <div class="t" style="left:142.5px;top:3.5px;font-size:8px;color:#aaaaaa">×</div>
    <div class="a" style="left:3px;top:16px;width:147px;height:1px;background:#efefef"></div>
    <div class="t" style="left:11.8px;top:27px;font-size:6px;color:#555555;transform:scaleX(0.85);transform-origin:left">起始里程</div>
    <div class="a" style="left:39.2px;top:24px;width:107px;height:12.7px;border:1px solid #e2e2e2;border-radius:1px"></div>
    <div class="t" style="left:45.4px;top:28px;font-size:5.5px;color:#bbbbbb;transform:scaleX(0.85);transform-origin:left">请输入起始里程</div>
    <div class="t" style="left:11.8px;top:48px;font-size:6px;color:#555555;transform:scaleX(0.85);transform-origin:left">里程间隔</div>
    <div class="a" style="left:39.2px;top:45.3px;width:107px;height:12.2px;border:1px solid #e2e2e2;border-radius:1px"></div>
    <div class="t" style="left:45.4px;top:49px;font-size:5.5px;color:#bbbbbb;transform:scaleX(0.85);transform-origin:left">请输入里程间隔</div>
    <div class="t" style="left:23px;top:69px;font-size:6px;color:#555555;transform:scaleX(0.85);transform-origin:left">列数</div>
    <div class="a" style="left:39.2px;top:65.9px;width:107px;height:12.7px;border:1px solid #6d9fe0;border-radius:1px"></div>
    <div class="t" style="left:45.4px;top:69px;font-size:6.5px;color:#333333">2|</div>
    <div class="a" style="left:94.3px;top:89.6px;width:23.3px;height:14.9px;border:1px solid #e6e6e6;border-radius:1px"></div>
    <div class="t" style="left:99.5px;top:94px;font-size:6px;color:#444444;transform:scaleX(0.85);transform-origin:left">取消</div>
    <div class="a" style="left:121.9px;top:89.6px;width:23.2px;height:14.9px;background:#3d86d0;border-radius:1px"></div>
    <div class="t" style="left:127px;top:94px;font-size:6px;color:#ffffff;font-weight:bold;transform:scaleX(0.85);transform-origin:left">确定</div>
  </div>
</div>

<!-- ============ PANEL 4 ============ -->
<div class="a" style="left:959px;top:436px;width:1px;height:362px;background:#36353b"></div>
<div class="a" id="p4" style="left:960px;top:436px;width:765px;height:362px;background:#36353b;overflow:hidden">
  <div class="a" style="left:37px;top:29px;width:728px;height:21.5px;background:#38373d"></div>
  <div class="a" style="left:37px;top:50.5px;width:610px;height:311.5px;background:#2c2b30"></div>
  <div class="a" style="left:647px;top:50.5px;width:118px;height:311.5px;background:#38383d"></div>
  <svg class="a" style="left:9px;top:10.2px" width="9" height="8" viewBox="0 0 11 9"><path d="M0 8 C3.8 8.3 6 5 4.3 0.4 C3.6 4 2.2 6.3 0 8 Z M5 8.1 C8.6 8.2 11.2 4.8 9.6 2.4 C8.8 1.1 6.6 0.3 4.3 0.4 C6.9 1.6 8.9 4 5 8.1 Z" fill="#f2f2f2"/></svg>
  <div class="t" style="left:22.5px;top:10.4px;font-size:7.6px;color:#f2f2f2;font-weight:bold;transform:scaleX(0.94);transform-origin:left">道路病害识别系统</div>
  <svg class="a" style="left:708.7px;top:8.8px" width="8" height="9.5" viewBox="0 0 8 9"><circle cx="4" cy="2.4" r="2.3" fill="#f4f4f4"/><path d="M0 9 Q0 5.2 4 5.2 Q8 5.2 8 9 Z" fill="#f4f4f4"/></svg>
  <div class="t" style="left:723.8px;top:11px;font-size:6.7px;color:#e8e8e8;font-weight:bold">admin</div>
  <svg class="a" style="left:748.6px;top:10.5px" width="7" height="7" viewBox="0 0 7 7"><path d="M4 0.6 L0.6 0.6 L0.6 6.4 L4 6.4" stroke="#dddddd" stroke-width="0.9" fill="none"/><path d="M2.5 3.5 L6.5 3.5 M5 2 L6.5 3.5 L5 5" stroke="#dddddd" stroke-width="0.8" fill="none"/></svg>
  <svg class="a" style="left:45.8px;top:36.5px" width="4" height="6" viewBox="0 0 4 6"><path d="M3.3 0.4 L0.8 3 L3.3 5.6" stroke="#e0e0e0" stroke-width="1" fill="none"/></svg>
  <div class="t" style="left:58.9px;top:36.3px;font-size:6.5px;color:#e0e0e0;font-weight:bold;transform:scaleX(0.88);transform-origin:left">首页</div>
  <svg class="a" style="left:12.5px;top:45.5px" width="12" height="11" viewBox="0 0 13 10"><path d="M6.5 0 L13 5 L11 5 L11 10 L8 10 L8 7 L5 7 L5 10 L2 10 L2 5 L0 5 Z" fill="#f4f4f4"/></svg>
  <div class="t" style="left:12.6px;top:61px;font-size:6px;color:#e2e2e2;font-weight:bold;transform:scaleX(0.88);transform-origin:left">首页</div>
  <svg class="a" style="left:12.6px;top:85.5px" width="10" height="11" viewBox="0 0 10 10"><circle cx="5" cy="2.6" r="2.5" fill="#cfcfd2"/><path d="M0 10 Q0 5.6 5 5.6 Q10 5.6 10 10 Z" fill="#cfcfd2"/></svg>
  <div class="t" style="left:6.5px;top:101px;font-size:6px;color:#a8a8ab;transform:scaleX(0.88);transform-origin:left">账号分配</div>

  <!-- image frame -->
  <div class="a" style="left:97px;top:60.5px;width:488.5px;height:292px;overflow:hidden"><svg width="488.5" height="292" viewBox="0 0 488.5 292" preserveAspectRatio="none" style="display:block"><defs><linearGradient id="g13" x1="0" x2="1" y1="0" y2="0"><stop offset="0.000" stop-color="rgb(42,42,42)"/><stop offset="0.020" stop-color="rgb(44,44,44)"/><stop offset="0.060" stop-color="rgb(42,42,42)"/><stop offset="0.071" stop-color="rgb(44,44,44)"/><stop offset="0.072" stop-color="rgb(106,106,106)"/><stop offset="0.100" stop-color="rgb(110,110,110)"/><stop offset="0.156" stop-color="rgb(104,104,104)"/><stop offset="0.210" stop-color="rgb(80,80,80)"/><stop offset="0.293" stop-color="rgb(74,74,74)"/><stop offset="0.342" stop-color="rgb(82,82,82)"/><stop offset="0.395" stop-color="rgb(110,110,110)"/><stop offset="0.475" stop-color="rgb(122,122,122)"/><stop offset="0.497" stop-color="rgb(126,126,126)"/><stop offset="0.538" stop-color="rgb(106,106,106)"/><stop offset="0.571" stop-color="rgb(120,120,120)"/><stop offset="0.596" stop-color="rgb(138,138,138)"/><stop offset="0.620" stop-color="rgb(128,128,128)"/><stop offset="0.651" stop-color="rgb(88,88,88)"/><stop offset="0.692" stop-color="rgb(86,86,86)"/><stop offset="0.716" stop-color="rgb(112,112,112)"/><stop offset="0.743" stop-color="rgb(140,140,140)"/><stop offset="0.778" stop-color="rgb(116,116,116)"/><stop offset="0.845" stop-color="rgb(102,102,102)"/><stop offset="0.911" stop-color="rgb(98,98,98)"/><stop offset="0.937" stop-color="rgb(80,80,80)"/><stop offset="0.968" stop-color="rgb(52,52,52)"/><stop offset="1.000" stop-color="rgb(44,44,44)"/></linearGradient></defs><rect width="488.5" height="292" fill="url(#g13)"/><rect width="488.5" height="292" filter="url(#spkw)" opacity="0.30"/><rect width="488.5" height="292" filter="url(#spk)" opacity="0.30"/><rect width="488.5" height="292" filter="url(#streak)" opacity="0.00"/><rect width="488.5" height="292" filter="url(#streakd)" opacity="0.00"/></svg>
    <div class="a" style="left:0;top:0;width:35px;height:292px;background:linear-gradient(90deg,#29292b,#2c2c2e 60%,#2a2a2c 95%,#3a3a3c)"></div>
    <div class="a" style="left:127.5px;top:44px;width:155px;height:18px;border:1px solid #d83a2a"></div>
    <div class="a" style="left:127.5px;top:44px;width:30px;height:6.5px;background:#e02a20"></div>
    <div class="t" style="left:129px;top:44.8px;font-size:4.5px;color:#ffffff;transform:scaleX(0.88);transform-origin:left">横向裂缝 0.55</div>
    <div class="a" style="left:284px;top:45.5px;width:7.5px;height:7.5px;background:#e02a20"></div>
    <div class="a" style="left:286.8px;top:48.3px;width:2px;height:2px;background:#fff"></div>
    <div class="a" style="left:198.4px;top:106.3px;width:88.3px;height:82.5px;border:1px solid #8a3a96"></div>
    <div class="a" style="left:198.4px;top:106.3px;width:30.4px;height:6.5px;background:#8a3a96"></div>
    <div class="t" style="left:200px;top:107px;font-size:4.5px;color:#ffffff;transform:scaleX(0.88);transform-origin:left">纵向裂缝 100</div>
    <div class="a" style="left:288.5px;top:107.5px;width:7.5px;height:7.5px;background:#8a3a96"></div>
    <div class="a" style="left:291.3px;top:110.3px;width:2px;height:2px;background:#fff"></div>
  </div>
  <div class="a" style="left:616.8px;top:61px;width:23.6px;height:14.7px;background:#2f5fb8;border-radius:1px"></div>
  <svg class="a" style="left:627px;top:66px" width="4" height="5" viewBox="0 0 4 5"><path d="M3 0.5 L1 2.5 L3 4.5" stroke="#dfe8f8" stroke-width="0.8" fill="none"/></svg>
  <div class="a" style="left:616.8px;top:81.4px;width:23.6px;height:14.7px;background:#8dbae6;border-radius:1px"></div>
  <svg class="a" style="left:627px;top:86.5px" width="4" height="5" viewBox="0 0 4 5"><path d="M1 0.5 L3 2.5 L1 4.5" stroke="#e8f2fc" stroke-width="0.8" fill="none"/></svg>

  <!-- right sidebar -->
  <div class="t" style="left:654px;top:61.3px;font-size:6.2px;color:#f0f0f0;font-weight:bold;transform:scaleX(0.88);transform-origin:left">置信度修改</div>
  <div class="a" style="left:654px;top:71.3px;width:104.2px;height:12.7px;background:#f3f3f5;border-radius:1px"></div>
  <div class="t" style="left:660px;top:75px;font-size:5.5px;color:#bcbcbc">40</div>
  <div class="t" style="left:654px;top:87.5px;font-size:4.8px;color:#b0b0b4;transform:scaleX(0.88);transform-origin:left">默认置信度 40 可设置的范围为 1-100</div>
  <div class="t" style="left:654px;top:105.4px;font-size:6.2px;color:#f0f0f0;font-weight:bold;transform:scaleX(0.88);transform-origin:left">描边宽度</div>
  <div class="a" style="left:654px;top:115px;width:104.2px;height:12.8px;background:#f3f3f5;border-radius:1px"></div>
  <div class="t" style="left:660px;top:118.8px;font-size:5.5px;color:#bcbcbc">2</div>
  <div class="t" style="left:654px;top:130.8px;font-size:4.8px;color:#b0b0b4;transform:scaleX(0.88);transform-origin:left">默认描边宽度2px 可设置的范围为 1-10</div>
  <div class="a" style="left:654px;top:148.3px;width:104.2px;height:15.1px;background:#3566b8;border-radius:1px"></div>
  <div class="t" style="left:700.5px;top:152.8px;font-size:6px;color:#ffffff;font-weight:bold;transform:scaleX(0.88);transform-origin:left">完成</div>
  <div class="a" style="left:654px;top:167px;width:104.2px;height:15px;background:#ececec;border-radius:1px"></div>
  <div class="t" style="left:685px;top:171.8px;font-size:5px;color:#a8a8a8;transform:scaleX(0.88);transform-origin:left">旋转与粗去像素计算</div>
  <div class="t" style="left:654px;top:194.7px;font-size:6px;color:#f0f0f0;font-weight:bold;transform:scaleX(0.88);transform-origin:left">裂缝数量信息</div>
  <div class="t" style="left:654px;top:209.8px;font-size:5.5px;color:#b8b8bb;transform:scaleX(0.88);transform-origin:left">横向裂缝</div>
  <div class="t" style="left:747.5px;top:209.6px;font-size:6px;color:#f4f4f4;font-weight:bold;transform:scaleX(0.88);transform-origin:left">1个</div>
  <div class="t" style="left:654px;top:224.6px;font-size:5.5px;color:#b8b8bb;transform:scaleX(0.88);transform-origin:left">纵向裂缝</div>
  <div class="t" style="left:747.5px;top:224.4px;font-size:6px;color:#f4f4f4;font-weight:bold;transform:scaleX(0.88);transform-origin:left">0个</div>
  <div class="t" style="left:654px;top:239.2px;font-size:5.5px;color:#b8b8bb;transform:scaleX(0.88);transform-origin:left">网状裂缝</div>
  <div class="t" style="left:747.5px;top:239px;font-size:6px;color:#f4f4f4;font-weight:bold;transform:scaleX(0.88);transform-origin:left">0个</div>
  <div class="t" style="left:654px;top:253.9px;font-size:5.5px;color:#b8b8bb;transform:scaleX(0.88);transform-origin:left">裂缝总数</div>
  <div class="t" style="left:747.5px;top:253.7px;font-size:6px;color:#f4f4f4;font-weight:bold;transform:scaleX(0.88);transform-origin:left">1个</div>
  <div class="a" style="left:654px;top:272.2px;width:104.2px;height:14.7px;background:#ffffff;border-radius:1px"></div>
  <div class="t" style="left:697px;top:277px;font-size:5px;color:#b0b0b0;transform:scaleX(0.88);transform-origin:left">下载图片</div>
  <div class="a" style="left:654px;top:291px;width:104.2px;height:14.8px;background:#f1b0b3;border-radius:1px"></div>
  <div class="t" style="left:697px;top:295.8px;font-size:5px;color:#fff4f4;transform:scaleX(0.88);transform-origin:left">删除图片</div>
  <div class="a" style="left:671.5px;top:338.3px;width:23.1px;height:14.7px;background:#ffffff;border-radius:1px"></div>
  <div class="t" style="left:677.5px;top:342.8px;font-size:5.5px;color:#555555;font-weight:bold;transform:scaleX(0.88);transform-origin:left">返回</div>
  <div class="a" style="left:698.8px;top:338.3px;width:31.5px;height:14.7px;background:#97c1e8;border-radius:1px"></div>
  <div class="t" style="left:703px;top:342.8px;font-size:5.5px;color:#f4f8fc;font-weight:bold;transform:scaleX(0.88);transform-origin:left">操作撤销</div>
  <div class="a" style="left:735px;top:338.3px;width:23px;height:14.7px;background:#97c1e8;border-radius:1px"></div>
  <div class="t" style="left:741px;top:342.8px;font-size:5.5px;color:#f4f8fc;font-weight:bold;transform:scaleX(0.88);transform-origin:left">保存</div>
</div>
</body></html>
